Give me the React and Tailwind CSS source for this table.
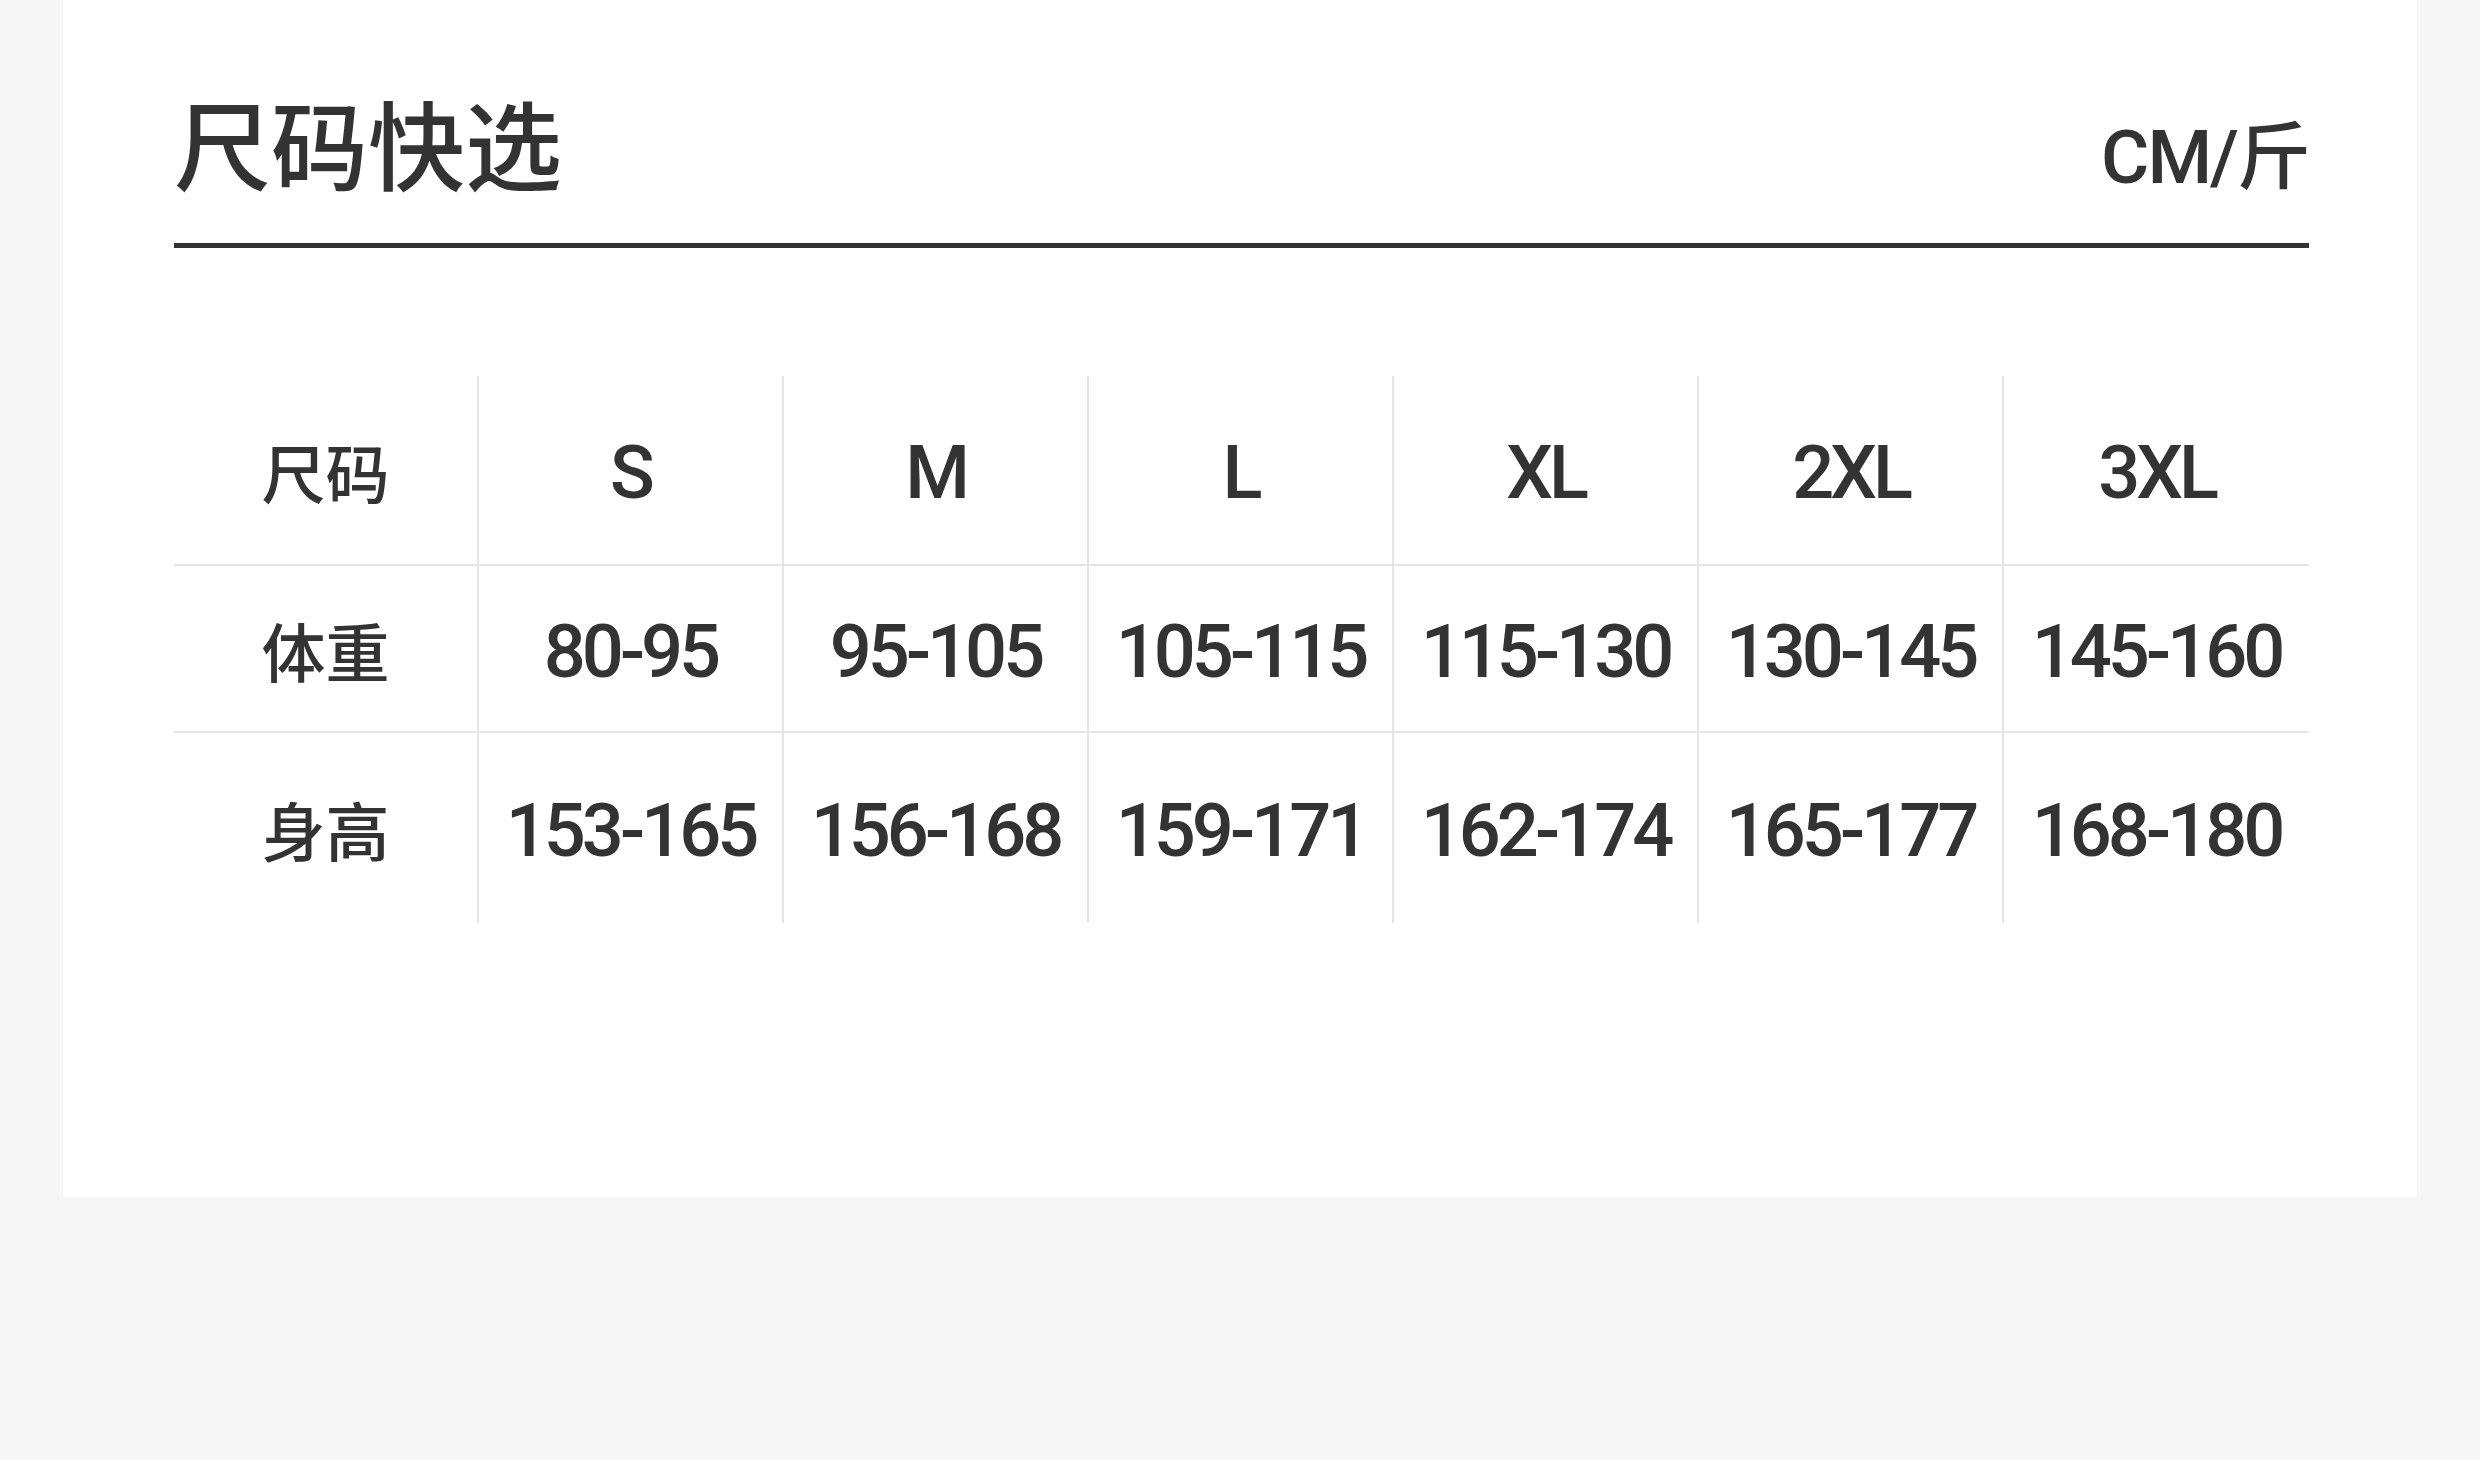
const rows = [
  { label: "尺码", values: ["S", "M", "L", "XL", "2XL", "3XL"], h: "h-[190px]" },
  { label: "体重", values: ["80-95", "95-105", "105-115", "115-130", "130-145", "145-160"], h: "h-[167px]" },
  { label: "身高", values: ["153-165", "156-168", "159-171", "162-174", "165-177", "168-180"], h: "h-[190px]" },
]

const cjk = "font-['Noto_Sans_CJK_SC',sans-serif]"
const latin = "font-['Roboto','Noto_Sans_CJK_SC',sans-serif]"

export default function App() {
  return (
    <div className="h-[1460px] w-full bg-[#f7f7f7] px-[63px] text-[#333333]">
      <div className="h-[1197px] bg-white pl-[111px] pr-[108px]">
        {/* header */}
        <div className="flex items-end justify-between border-b-[5px] border-[#333333] pt-[92px] pb-[54px]">
          <h1 className={`${cjk} text-[97px] font-medium leading-none`}>尺码快选</h1>
          <span className={`${latin} -mb-[6px] text-[74px] font-medium leading-none tracking-[-2px]`}>CM/斤</span>
        </div>

        {/* size table */}
        <div className="mt-[128px]">
          {rows.map((row, ri) => (
            <div
              key={row.label}
              className={`grid grid-cols-7 ${row.h} ${ri < rows.length - 1 ? "border-b-2 border-[#e6e6e6]" : ""}`}
            >
              <div className={`flex items-center justify-center border-r-2 border-[#e6e6e6] ${cjk} text-[64px] font-medium leading-none`}>
                {row.label}
              </div>
              {row.values.map((v, i) => (
                <div
                  key={v}
                  className={`flex items-center justify-center pt-[6px] ${i < 5 ? "border-r-2 border-[#e6e6e6]" : ""} ${latin} text-[74px] font-medium leading-none tracking-[-4px]`}
                >
                  {v}
                </div>
              ))}
            </div>
          ))}
        </div>
      </div>
    </div>
  )
}
